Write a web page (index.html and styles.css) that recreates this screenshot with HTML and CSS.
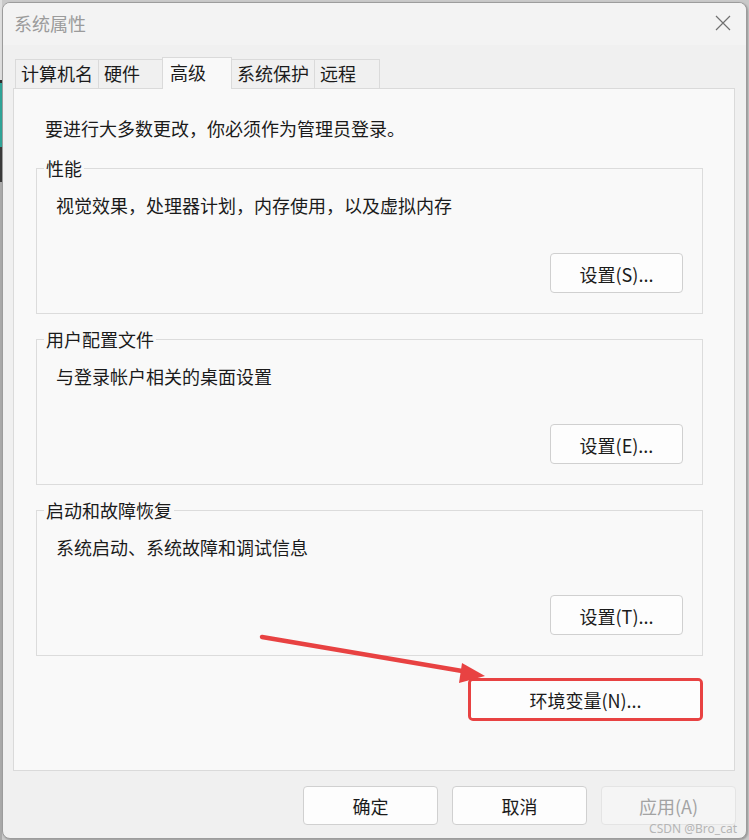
FILE: index.html
```html
<!DOCTYPE html>
<html lang="zh-CN">
<head>
<meta charset="utf-8">
<title>系统属性</title>
<link rel="stylesheet" href="styles.css">
</head>
<body>
<div class="window">
  <div class="titlebar">
    <span class="title">系统属性</span>
    <span class="close">
      <svg width="16" height="16" viewBox="0 0 16 16"><path d="M1 1 L15 15 M15 1 L1 15" stroke="#707070" stroke-width="1.2" fill="none"/></svg>
    </span>
  </div>
  <div class="client">
    <div class="tabs">
      <div class="tab">计算机名</div>
      <div class="tab">硬件</div>
      <div class="tab active">高级</div>
      <div class="tab">系统保护</div>
      <div class="tab">远程</div>
    </div>
    <div class="panel">
      <p class="notice">要进行大多数更改，你必须作为管理员登录。</p>
      <fieldset class="group">
        <legend>性能</legend>
        <p class="desc">视觉效果，处理器计划，内存使用，以及虚拟内存</p>
        <div class="actions"><span class="btn btn-set">设置(S)...</span></div>
      </fieldset>
      <fieldset class="group">
        <legend>用户配置文件</legend>
        <p class="desc">与登录帐户相关的桌面设置</p>
        <div class="actions"><span class="btn btn-set">设置(E)...</span></div>
      </fieldset>
      <fieldset class="group">
        <legend>启动和故障恢复</legend>
        <p class="desc">系统启动、系统故障和调试信息</p>
        <div class="actions"><span class="btn btn-set">设置(T)...</span></div>
      </fieldset>
      <div class="env-row">
        <div class="highlight"><span class="btn btn-env">环境变量(N)...</span></div>
      </div>
    </div>
    <div class="footer">
      <span class="btn btn-foot">确定</span>
      <span class="btn btn-foot">取消</span>
      <span class="btn btn-foot disabled">应用(A)</span>
    </div>
  </div>
  <span class="watermark">CSDN @Bro_cat</span>
</div>
<svg class="arrow" width="749" height="840" viewBox="0 0 749 840">
  <line x1="262" y1="637" x2="468" y2="672" stroke="#e84242" stroke-width="4.5" stroke-linecap="round"/>
  <polygon points="462,663 485,676 459,683" fill="#e84242"/>
</svg>
</body>
</html>
```
FILE: styles.css
```css
* { box-sizing: border-box; }

html, body {
  margin: 0;
  height: 100%;
}

body {
  padding: 2px 0 0 2px;
  background-color: #c9c9c9;
  background-image: linear-gradient(to bottom, #dedede 0 80px, #2f2f2f 80px 83px, #2fa397 83px 147px, #3a3a3a 147px 182px, #a9a9a9 182px);
  background-size: 2px 100%;
  background-repeat: no-repeat;
  font-family: "Noto Sans CJK SC", "Noto Sans", sans-serif;
  font-size: 18px;
  color: #1b1b1b;
  overflow: hidden;
  position: relative;
}

.window {
  position: relative;
  width: 745px;
  height: 837px;
  border: 1px solid #9c9c9c;
  border-radius: 8px;
  background: #f0f0f0;
  overflow: hidden;
  display: flex;
  flex-direction: column;
  box-shadow: 1px 1px 2px rgba(0,0,0,0.25);
}

.titlebar {
  height: 42px;
  flex: none;
  background: #f3f3f3;
  display: flex;
  align-items: center;
  justify-content: space-between;
  padding: 0 0 3px 11px;
}

.title {
  color: #9b9b9b;
  font-size: 18px;
  line-height: 24px;
}

.close {
  width: 46px;
  height: 24px;
  display: flex;
  align-items: center;
  justify-content: center;
}

.close svg { display: block; }

.client {
  flex: 1;
  display: flex;
  flex-direction: column;
  padding: 12px 11px 0 10px;
}

.tabs {
  height: 31px;
  display: flex;
  align-items: flex-end;
  margin-left: 2px;
  position: relative;
  z-index: 1;
}

.tab {
  height: 29px;
  min-width: 66px;
  padding: 0 5px;
  margin-right: -1px;
  border: 1px solid #dadada;
  border-bottom: none;
  background: #f0f0f0;
  line-height: 26px;
  white-space: nowrap;
}

.tab.active {
  height: 32px;
  min-width: 70px;
  margin: 0 -1px -1px -1px;
  padding: 0 7px;
  background: #f9f9f9;
  line-height: 28px;
  position: relative;
  z-index: 2;
}

.panel {
  height: 683px;
  flex: none;
  border: 1px solid #dadada;
  background: #f9f9f9;
  padding: 27px 31px 0 22px;
}

.notice {
  margin: 0 0 16px 9px;
  line-height: 24px;
}

.group {
  margin: 0 0 13px 0;
  padding: 13px 19px 20px 19px;
  border: 1px solid #dcdcdc;
  min-inline-size: 0;
}

.group legend {
  margin-left: -12px;
  padding: 0 2px;
  line-height: 24px;
}

.desc {
  margin: 0;
  line-height: 24px;
}

.actions {
  display: flex;
  justify-content: flex-end;
  margin-top: 36px;
}

.btn {
  display: flex;
  align-items: center;
  justify-content: center;
  background: #fdfdfd;
  border: 1px solid #d0d0d0;
  border-radius: 4px;
  line-height: 24px;
  white-space: nowrap;
}

.btn-set {
  width: 133px;
  height: 40px;
  padding-top: 1px;
}

.env-row {
  display: flex;
  justify-content: flex-end;
  margin-top: 22px;
}

.highlight {
  width: 235px;
  height: 43px;
  border: 3px solid #e84242;
  border-radius: 5px;
  background: #fdfdfd;
  display: flex;
}

.btn-env {
  flex: 1;
  border: none;
  border-radius: 2px;
}

.footer {
  display: flex;
  justify-content: flex-end;
  gap: 14px;
  padding-top: 15px;
  margin-right: -1px;
}

.btn-foot {
  width: 135px;
  height: 39px;
}

.btn-foot.disabled {
  background: #f5f5f5;
  border-color: #e4e4e4;
  color: #a3a3a3;
}

.watermark {
  position: absolute;
  right: 9px;
  bottom: 1px;
  font-family: "Noto Sans", "DejaVu Sans", sans-serif;
  font-size: 12px;
  line-height: 16px;
  color: #b5b5b5;
}

.arrow {
  position: absolute;
  left: 0;
  top: 0;
  pointer-events: none;
}
```
